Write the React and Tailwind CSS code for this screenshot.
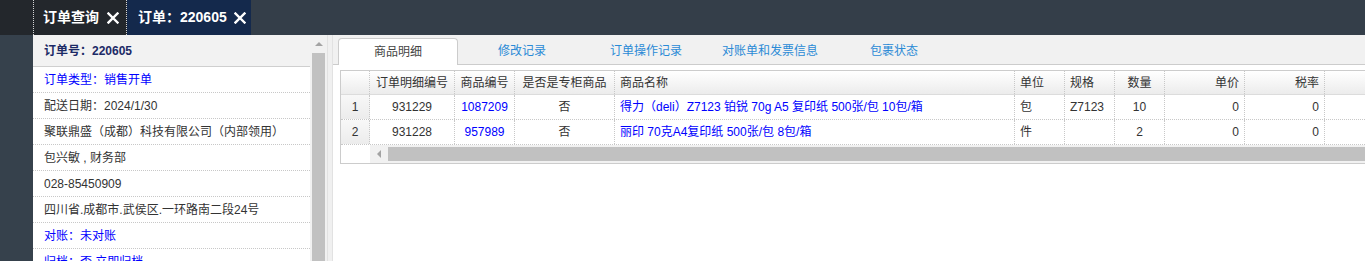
import React from "react";

const font = "font-['Liberation_Sans','Noto_Sans_CJK_SC',sans-serif]";

function CloseIcon() {
  return (
    <svg width="12" height="12" viewBox="0 0 12 12" className="shrink-0">
      <path d="M1.5 1.5 L10.5 10.5 M10.5 1.5 L1.5 10.5" stroke="#fff" strokeWidth="2.4" strokeLinecap="square" />
    </svg>
  );
}

const infoRows = [
  { text: "订单类型：销售开单", blue: true },
  { text: "配送日期：2024/1/30" },
  { text: "聚联鼎盛（成都）科技有限公司（内部领用）" },
  { text: "包兴敏 , 财务部" },
  { text: "028-85450909" },
  { text: "四川省.成都市.武侯区.一环路南二段24号" },
  { text: "对账：未对账", blue: true },
  { text: "归档：否 立即归档", blue: true },
];

const tabs = ["商品明细", "修改记录", "订单操作记录", "对账单和发票信息", "包裹状态"];

const cols = [
  { label: "订单明细编号", w: "w-[85px]", align: "justify-center" },
  { label: "商品编号", w: "w-[60px]", align: "justify-center" },
  { label: "是否是专柜商品", w: "w-[100px]", align: "justify-center" },
  { label: "商品名称", w: "w-[400px]", align: "justify-start" },
  { label: "单位", w: "w-[50px]", align: "justify-start" },
  { label: "规格", w: "w-[50px]", align: "justify-start" },
  { label: "数量", w: "w-[50px]", align: "justify-center" },
  { label: "单价", w: "w-[80px]", align: "justify-end" },
  { label: "税率", w: "w-[80px]", align: "justify-end" },
  { label: "", w: "w-[120px]", align: "justify-start" },
];

const rows = [
  ["931229", "1087209", "否", "得力（deli）Z7123 铂锐 70g A5 复印纸 500张/包 10包/箱", "包", "Z7123", "10", "0", "0", ""],
  ["931228", "957989", "否", "丽印 70克A4复印纸 500张/包 8包/箱", "件", "", "2", "0", "0", ""],
];

const blueCols = [1, 3];

export default function App() {
  return (
    <div className={`w-[1365px] h-[261px] overflow-hidden flex flex-col bg-white text-[12px] text-[#333] ${font}`}>
      {/* top bar */}
      <div className="h-[35px] flex shrink-0">
        <div className="w-[33px] bg-[#23272c]"></div>
        <div className="w-[94px] bg-[#23272c] border-x border-dotted border-white/80 flex items-center pl-[9px] gap-[8px] text-white text-[14px] font-bold">
          <span>订单查询</span>
          <CloseIcon />
        </div>
        <div className="w-[124px] bg-[#14294c] flex items-center pl-[11px] gap-[7px] text-white text-[14px] font-bold">
          <span>订单：220605</span>
          <CloseIcon />
        </div>
        <div className="flex-1 bg-[#343e49]"></div>
      </div>

      <div className="flex flex-1 min-h-0">
        <div className="w-[33px] bg-[#36414c] shrink-0"></div>

        {/* left info panel */}
        <div className="w-[277px] shrink-0 bg-white flex flex-col">
          <div className="h-[32px] shrink-0 bg-[#f2f2f2] border-b border-[#cfcfcf] flex items-center px-[11px] font-bold text-[#1c2a66]">
            订单号：220605
          </div>
          {infoRows.map((r) => (
            <div
              key={r.text}
              className={`h-[26px] shrink-0 border-b border-dotted border-[#c8c8c8] flex items-center px-[11px] whitespace-nowrap ${r.blue ? "text-[#0000ff]" : "text-[#333]"}`}
            >
              {r.text}
            </div>
          ))}
        </div>

        {/* vertical scrollbar */}
        <div className="w-[17px] shrink-0 bg-[#f1f1f1] flex flex-col items-center">
          <div className="h-[18px] flex items-center justify-center">
            <div className="w-0 h-0 border-x-[4px] border-x-transparent border-b-[4px] border-b-[#a3a3a3]"></div>
          </div>
          <div className="w-[13px] flex-1 bg-[#c1c1c1]"></div>
        </div>

        {/* splitter */}
        <div className="w-[6px] shrink-0 bg-[#f0f0f0] border-x border-[#e2e2e2]"></div>

        {/* right panel */}
        <div className="flex-1 min-w-0 overflow-hidden bg-white flex flex-col">
          <div className="h-[30px] shrink-0 bg-[#f1f1f1] border-b border-[#cccccc] flex items-end pl-[5px] gap-[4px]">
            {tabs.map((t, i) =>
              i === 0 ? (
                <div
                  key={t}
                  className="w-[120px] h-[27px] mb-[-1px] shrink-0 bg-white border border-b-0 border-[#cccccc] rounded-t-[4px] flex items-center justify-center text-[#444]"
                >
                  {t}
                </div>
              ) : (
                <div key={t} className="w-[120px] h-[27px] shrink-0 flex items-center justify-center text-[#2a8ad6]">
                  {t}
                </div>
              )
            )}
          </div>

          {/* grid */}
          <div className="mt-[5px] ml-[7px] w-[1150px] shrink-0 border border-[#cccccc] flex flex-col">
            <div className="h-[24px] flex border-b border-[#dcdcdc] bg-linear-to-b from-[#ffffff] to-[#ececec]">
              <div className="w-[29px] shrink-0 border-r border-dotted border-[#c8c8c8]"></div>
              {cols.map((c, i) => (
                <div
                  key={i}
                  className={`${c.w} shrink-0 border-r border-dotted border-[#c8c8c8] px-[5px] flex items-center whitespace-nowrap ${c.align}`}
                >
                  {c.label}
                </div>
              ))}
            </div>
            {rows.map((r, ri) => (
              <div key={ri} className="h-[25px] flex border-b border-dotted border-[#c8c8c8]">
                <div className="w-[29px] shrink-0 border-r border-dotted border-[#c8c8c8] bg-linear-to-b from-[#f8f8f8] to-[#ececec] flex items-center justify-center">
                  {ri + 1}
                </div>
                {cols.map((c, ci) => (
                  <div
                    key={ci}
                    className={`${c.w} shrink-0 border-r border-dotted border-[#c8c8c8] px-[5px] flex items-center whitespace-nowrap ${c.align} ${blueCols.includes(ci) ? "text-[#0000ff]" : "text-[#333]"}`}
                  >
                    {r[ci]}
                  </div>
                ))}
              </div>
            ))}
            {/* horizontal scrollbar */}
            <div className="h-[18px] flex">
              <div className="w-[29px] shrink-0 bg-white"></div>
              <div className="flex-1 bg-[#f1f1f1] flex items-center">
                <div className="w-[18px] h-full flex items-center justify-center shrink-0">
                  <div className="w-0 h-0 border-y-[4px] border-y-transparent border-r-[4px] border-r-[#a3a3a3]"></div>
                </div>
                <div className="flex-1 h-[14px] bg-[#c1c1c1]"></div>
              </div>
            </div>
          </div>
        </div>
      </div>
    </div>
  );
}
